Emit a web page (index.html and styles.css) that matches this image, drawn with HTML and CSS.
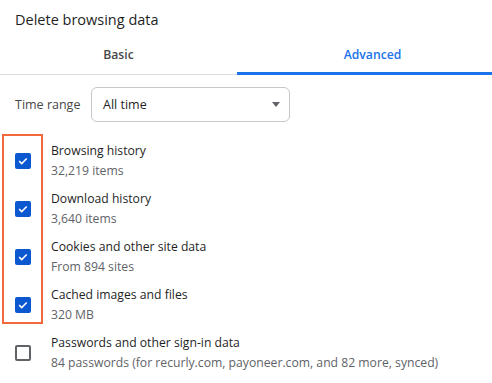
FILE: index.html
```html
<!DOCTYPE html>
<html lang="en">
<head>
    <meta charset="UTF-8">
    <meta name="viewport" content="width=device-width, initial-scale=1.0">
    <title>Delete browsing data</title>
    <link rel="stylesheet" href="styles.css">
</head>
<body>
    <div class="dialog">
        <div class="title">Delete browsing data</div>

        <!-- Tabs -->
        <div class="tabs">
            <div class="tab">Basic</div>
            <div class="tab tab-active">Advanced</div>
        </div>

        <!-- Time range select -->
        <div class="range-row">
            <span class="range-label">Time range</span>
            <div class="select">
                <span>All time</span>
                <span class="arrow"></span>
            </div>
        </div>

        <div class="items">
            <div class="highlight">
                <div class="item">
                    <span class="box checked"><svg viewBox="0 0 16 16" width="16" height="16"><path d="M4.2 8.2l2.5 2.4 5-5.1" fill="none" stroke="#fff" stroke-width="1.6"/></svg></span>
                    <div class="text">
                        <div class="name">Browsing history</div>
                        <div class="sub">32,219 items</div>
                    </div>
                </div>
                <div class="item">
                    <span class="box checked"><svg viewBox="0 0 16 16" width="16" height="16"><path d="M4.2 8.2l2.5 2.4 5-5.1" fill="none" stroke="#fff" stroke-width="1.6"/></svg></span>
                    <div class="text">
                        <div class="name">Download history</div>
                        <div class="sub">3,640 items</div>
                    </div>
                </div>
                <div class="item">
                    <span class="box checked"><svg viewBox="0 0 16 16" width="16" height="16"><path d="M4.2 8.2l2.5 2.4 5-5.1" fill="none" stroke="#fff" stroke-width="1.6"/></svg></span>
                    <div class="text">
                        <div class="name">Cookies and other site data</div>
                        <div class="sub">From 894 sites</div>
                    </div>
                </div>
                <div class="item">
                    <span class="box checked"><svg viewBox="0 0 16 16" width="16" height="16"><path d="M4.2 8.2l2.5 2.4 5-5.1" fill="none" stroke="#fff" stroke-width="1.6"/></svg></span>
                    <div class="text">
                        <div class="name">Cached images and files</div>
                        <div class="sub">320 MB</div>
                    </div>
                </div>
            </div>
            <div class="item item-plain">
                <span class="box"></span>
                <div class="text">
                    <div class="name">Passwords and other sign-in data</div>
                    <div class="sub">84 passwords (for recurly.com, payoneer.com, and 82 more, synced)</div>
                </div>
            </div>
        </div>
    </div>
</body>
</html>
```

FILE: styles.css
```css
/* Basic page */
body {
    margin: 0;
    background: #fff;
    font-family: 'Open Sans', 'Noto Sans', sans-serif;
    color: #1f1f1f;
}

.dialog {
    width: 492px;
    height: 383px;
    overflow: hidden;
}

.title {
    font-size: 14.5px;
    padding: 8px 15px 0;
    height: 24px;
    line-height: 24px;
}

/* Tabs */
.tabs {
    display: flex;
    margin-top: 8px;
}

.tab {
    flex: 0 0 237px;
    text-align: center;
    font-size: 12.2px;
    font-weight: 600;
    color: #474747;
    height: 35px;
    line-height: 30px;
    box-sizing: border-box;
    border-bottom: 1px solid #dadce0;
}

.tab-active {
    flex: 1;
    color: #1a73e8;
    border-bottom: 3px solid #1a73e8;
    height: 35px;
    padding-left: 16px;
}

/* Time range */
.range-row {
    display: flex;
    align-items: center;
    padding: 12px 0 0 15px;
}

.range-label {
    font-size: 12.5px;
    color: #474747;
    width: 76px;
}

.select {
    width: 199px;
    height: 35px;
    box-sizing: border-box;
    border: 1px solid #c7c7c7;
    border-radius: 6px;
    display: flex;
    align-items: center;
    justify-content: space-between;
    padding: 0 9px 0 11px;
    font-size: 12.5px;
    color: #1f1f1f;
}

.arrow {
    width: 0;
    height: 0;
    border-left: 4px solid transparent;
    border-right: 4px solid transparent;
    border-top: 5px solid #5f6368;
}

/* Checkbox list */
.items {
    padding-top: 12px;
}

.highlight {
    margin-left: 2px;
    width: 41px;
    height: 190px;
    box-sizing: border-box;
    border: 2px solid #f26a3b;
    overflow: visible;
    padding-top: 1px;
}

.item {
    display: flex;
    align-items: center;
    height: 48px;
    width: 480px;
}

.highlight .item {
    margin-left: -4px;
}

.item-plain {
    margin-top: 5px;
}

.box {
    width: 16px;
    height: 16px;
    margin-left: 15px;
    margin-right: 20px;
    box-sizing: border-box;
    border: 2px solid #5f6368;
    border-radius: 2px;
    flex: none;
}

.box.checked {
    background: #0b57d0;
    border: none;
}

.box svg {
    display: block;
}

.text {
    white-space: nowrap;
}

.name {
    font-size: 12.2px;
    line-height: 20px;
    color: #1f1f1f;
}

.sub {
    font-size: 12.2px;
    line-height: 20px;
    color: #5f6368;
}
```
